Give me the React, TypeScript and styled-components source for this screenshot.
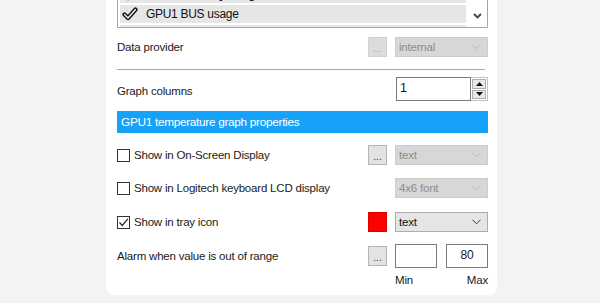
import React from 'react';
import styled, { createGlobalStyle } from 'styled-components';

const GlobalStyle = createGlobalStyle`
  html, body {
    margin: 0;
    padding: 0;
    background: #f3f3f3;
  }
  body {
    font-family: "Liberation Sans", Arial, sans-serif;
    font-size: 11.5px;
    letter-spacing: -0.2px;
    color: #1a1a1a;
    overflow: hidden;
  }
`;

const Page = styled.div`
  width: 600px;
  height: 303px;
  overflow: hidden;
`;

// the dialog is scrolled down, so its top sits above the window
const Panel = styled.div`
  width: 391px;
  margin-left: 106px;
  margin-top: -40px;
  padding: 0 9px 8px 11px;
  box-sizing: border-box;
  background: #fff;
  border-radius: 0 0 8px 8px;
  display: flex;
  flex-direction: column;
`;

const ListBox = styled.div`
  height: 68px;
  border: 1px solid #a6a6a6;
  box-sizing: border-box;
  display: flex;
  overflow: hidden;
`;

const ListRows = styled.div`
  flex: 1;
  padding: 4px 1px 0 2px;
  display: flex;
  flex-direction: column;
  gap: 2px;
`;

const ListRow = styled.div<{ $bold?: boolean }>`
  height: 18px;
  flex: none;
  background: #e6e6e6;
  display: flex;
  align-items: center;
  gap: 8px;
  padding-left: 2px;
  font-size: 12px;
  letter-spacing: -0.3px;
  font-weight: ${(p) => (p.$bold ? 700 : 400)};
  color: #111;
`;

const ScrollColumn = styled.div`
  width: 20px;
  display: flex;
  flex-direction: column;
  justify-content: flex-end;
  align-items: center;
  padding-bottom: 8px;
`;

const FieldRow = styled.div<{ $h: number; $mt: number }>`
  height: ${(p) => p.$h}px;
  margin-top: ${(p) => p.$mt}px;
  display: flex;
  align-items: center;
  flex: none;
`;

const Label = styled.div<{ $drop?: number }>`
  flex: 1;
  display: flex;
  align-items: center;
  padding-top: ${(p) => p.$drop || 0}px;
  white-space: nowrap;
`;

const Slot = styled.div`
  width: 19px;
  height: 20px;
  margin-right: 8px;
  flex: none;
`;

const DotsButton = styled.div<{ $disabled?: boolean }>`
  width: 19px;
  height: 20px;
  box-sizing: border-box;
  margin-right: 8px;
  flex: none;
  border: 1px solid ${(p) => (p.$disabled ? '#d2d2d2' : '#b4b4b4')};
  background: ${(p) => (p.$disabled ? '#dcdcdc' : '#e3e3e3')};
  color: ${(p) => (p.$disabled ? '#a8a8a8' : '#333')};
  font-size: 10px;
  letter-spacing: 0;
  display: flex;
  align-items: flex-end;
  justify-content: center;
  padding-bottom: 3px;
  line-height: 8px;
`;

const Swatch = styled.div<{ $color: string }>`
  width: 19px;
  height: 20px;
  box-sizing: border-box;
  margin-right: 8px;
  flex: none;
  background: ${(p) => p.$color};
  border: 1px solid #e00000;
`;

const Dropdown = styled.div<{ $disabled?: boolean }>`
  width: 93px;
  height: 20px;
  box-sizing: border-box;
  flex: none;
  border: 1px solid ${(p) => (p.$disabled ? '#cdcdcd' : '#adadad')};
  background: ${(p) => (p.$disabled ? '#d7d7d7' : '#e5e5e5')};
  color: ${(p) => (p.$disabled ? '#8c8c8c' : '#111')};
  display: flex;
  align-items: center;
  justify-content: space-between;
  padding: 0 6px 0 3px;
`;

const Separator = styled.div`
  height: 1px;
  margin-top: 12px;
  margin-right: 3px;
  background: #a8a8a8;
  flex: none;
`;

const Spinner = styled.div`
  width: 92px;
  height: 24px;
  display: flex;
  flex: none;
`;

const SpinInput = styled.div`
  flex: 1;
  border: 1px solid #7a7a7a;
  background: #fff;
  padding: 3px 0 0 3px;
  font-size: 12.5px;
  color: #1b1030;
`;

const SpinColumn = styled.div`
  width: 17px;
  box-sizing: border-box;
  border: 1px solid #c4c4c4;
  border-left: none;
  padding: 1px;
  display: flex;
  flex-direction: column;
  gap: 1px;
`;

const SpinButton = styled.div`
  flex: 1;
  background: #e8e8e8;
  border: 1px solid #adadad;
  display: flex;
  align-items: center;
  justify-content: center;
`;

const SectionBar = styled.div`
  height: 22px;
  margin-top: 10px;
  flex: none;
  background: #17a2fa;
  color: #fff;
  display: flex;
  align-items: center;
  padding-left: 4px;
  font-size: 11.8px;
  letter-spacing: -0.3px;
`;

const Box = styled.div`
  width: 13px;
  height: 13px;
  box-sizing: border-box;
  border: 1px solid #333;
  background: #fff;
  margin-right: 4px;
  flex: none;
  display: flex;
  align-items: center;
  justify-content: center;
`;

const RangeGroup = styled.div`
  width: 93px;
  display: flex;
  justify-content: space-between;
  flex: none;
`;

const NumberBox = styled.div`
  width: 42px;
  height: 24px;
  box-sizing: border-box;
  border: 1px solid #7a7a7a;
  background: #fff;
  display: flex;
  align-items: center;
  justify-content: center;
  padding-bottom: 3px;
  font-size: 12px;
`;

const RangeLabels = styled.div`
  width: 93px;
  margin-left: auto;
  margin-top: 5px;
  height: 14px;
  display: flex;
  justify-content: space-between;
  align-items: center;
  flex: none;
`;

const Chevron = ({ color = '#333' }: { color?: string }) => (
  <svg width="9" height="6" viewBox="0 0 9 6">
    <polyline points="0.5,0.8 4.5,4.8 8.5,0.8" fill="none" stroke={color} strokeWidth="1" />
  </svg>
);

const ListCheck = () => (
  <svg width="16" height="14" viewBox="0 0 16 14">
    <path d="M2.5 7.5 L6 11 L13.5 2.5" fill="none" stroke="#111" strokeWidth="4.2" strokeLinecap="round" strokeLinejoin="round" />
    <path d="M2.5 7.5 L6 11 L13.5 2.5" fill="none" stroke="#fff" strokeWidth="1.3" strokeLinecap="round" strokeLinejoin="round" />
  </svg>
);

const Tick = () => (
  <svg width="11" height="11" viewBox="0 0 11 11">
    <polyline points="1.5,5.5 4.3,8.5 9.8,1.8" fill="none" stroke="#222" strokeWidth="1.2" />
  </svg>
);

const Check = ({ checked, children }: { checked?: boolean; children: React.ReactNode }) => (
  <Label>
    <Box>{checked && <Tick />}</Box>
    {children}
  </Label>
);

const App: React.FC = () => {
  return (
    <>
      <GlobalStyle />
      <Page>
        <Panel>
          <ListBox>
            <ListRows>
              <ListRow>
                <ListCheck />
                GPU1 memory controller load
              </ListRow>
              <ListRow $bold>
                <ListCheck />
                GPU1 memory usage
              </ListRow>
              <ListRow>
                <ListCheck />
                GPU1 BUS usage
              </ListRow>
              <ListRow>
                <ListCheck />
                GPU1 fan speed
              </ListRow>
            </ListRows>
            <ScrollColumn>
              <svg width="9" height="6" viewBox="0 0 9 6">
                <polyline points="1,1 4.5,4.5 8,1" fill="none" stroke="#444" strokeWidth="1.8" />
              </svg>
            </ScrollColumn>
          </ListBox>

          <FieldRow $h={20} $mt={9}>
            <Label>Data provider</Label>
            <DotsButton $disabled>...</DotsButton>
            <Dropdown $disabled>
              internal
              <Chevron color="#b8b8b8" />
            </Dropdown>
          </FieldRow>

          <Separator />

          <FieldRow $h={24} $mt={7}>
            <Label $drop={4}>Graph columns</Label>
            <Spinner>
              <SpinInput>1</SpinInput>
              <SpinColumn>
                <SpinButton>
                  <svg width="7" height="4" viewBox="0 0 7 4"><polygon points="3.5,0 7,4 0,4" fill="#111" /></svg>
                </SpinButton>
                <SpinButton>
                  <svg width="7" height="4" viewBox="0 0 7 4"><polygon points="0,0 7,0 3.5,4" fill="#111" /></svg>
                </SpinButton>
              </SpinColumn>
            </Spinner>
          </FieldRow>

          <SectionBar>GPU1 temperature graph properties</SectionBar>

          <FieldRow $h={20} $mt={12}>
            <Check>Show in On-Screen Display</Check>
            <DotsButton>...</DotsButton>
            <Dropdown $disabled>
              text
              <Chevron color="#b8b8b8" />
            </Dropdown>
          </FieldRow>

          <FieldRow $h={20} $mt={13}>
            <Check>Show in Logitech keyboard LCD display</Check>
            <Slot />
            <Dropdown $disabled>
              4x6 font
              <Chevron color="#b8b8b8" />
            </Dropdown>
          </FieldRow>

          <FieldRow $h={20} $mt={14}>
            <Check checked>Show in tray icon</Check>
            <Swatch $color="#ff0000" />
            <Dropdown>
              text
              <Chevron />
            </Dropdown>
          </FieldRow>

          <FieldRow $h={24} $mt={12}>
            <Label>Alarm when value is out of range</Label>
            <DotsButton>...</DotsButton>
            <RangeGroup>
              <NumberBox />
              <NumberBox>80</NumberBox>
            </RangeGroup>
          </FieldRow>

          <RangeLabels>
            <span>Min</span>
            <span>Max</span>
          </RangeLabels>
        </Panel>
      </Page>
    </>
  );
};

export default App;
